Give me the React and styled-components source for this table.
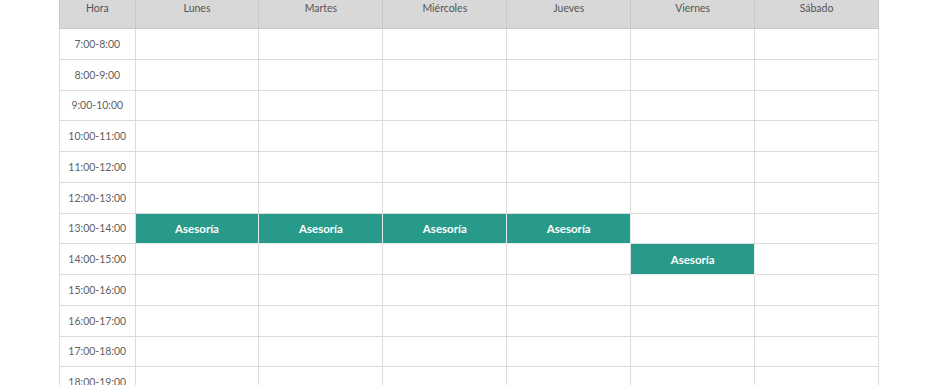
import React from "react";
import styled, { createGlobalStyle } from "styled-components";

const Global = createGlobalStyle`
  html, body { margin: 0; padding: 0; background: #fff; }
  body { font-family: Lato, "Noto Sans", sans-serif; overflow: hidden; }
`;

const Page = styled.div`
  padding-left: 59px;
  height: 385px;
  overflow: hidden;
`;

const Table = styled.table`
  border-collapse: collapse;
  table-layout: fixed;
  width: 820px;
`;

const HeadRow = styled.tr`
  height: 28px;
`;

const HeadCell = styled.th`
  background: #d8d8d8;
  border: 1px solid #c9c9c9;
  border-top: none;
  box-sizing: border-box;
  height: 28px;
  padding: 0 0 12px;
  line-height: 16px;
  font-weight: 400;
  font-size: 10.5px;
  color: #555;
  text-align: center;
  vertical-align: top;
  width: ${(p) => (p.$narrow ? "75px" : "123px")};
`;

const Row = styled.tr`
  height: 30.75px;
`;

const TimeCell = styled.td`
  border: 1px solid #dcdcdc;
  font-size: 10.5px;
  color: #5f5f5f;
  text-align: center;
  padding: 0;
`;

const Cell = styled.td`
  border: 1px solid #dcdcdc;
  padding: 0;
  text-align: center;
  font-size: 11.5px;
  font-weight: 700;
  color: #fff;
  background: ${(p) => (p.$busy ? "#279a89" : "#fff")};
  border-color: ${(p) => (p.$busy ? "#e4ecea" : "#dcdcdc")};
`;

const days = ["Lunes", "Martes", "Miércoles", "Jueves", "Viernes", "Sábado"];
const hours = [7, 8, 9, 10, 11, 12, 13, 14, 15, 16, 17, 18];
const busy = {
  13: [0, 1, 2, 3],
  14: [4],
};

export default function App() {
  return (
    <>
      <Global />
      <Page>
        <Table>
          <thead>
            <HeadRow>
              <HeadCell $narrow>Hora</HeadCell>
              {days.map((d) => (
                <HeadCell key={d}>{d}</HeadCell>
              ))}
            </HeadRow>
          </thead>
          <tbody>
            {hours.map((h) => (
              <Row key={h}>
                <TimeCell>{`${h}:00-${h + 1}:00`}</TimeCell>
                {days.map((d, i) => {
                  const b = (busy[h] || []).includes(i);
                  return (
                    <Cell key={d} $busy={b}>
                      {b ? "Asesoría" : ""}
                    </Cell>
                  );
                })}
              </Row>
            ))}
          </tbody>
        </Table>
      </Page>
    </>
  );
}
